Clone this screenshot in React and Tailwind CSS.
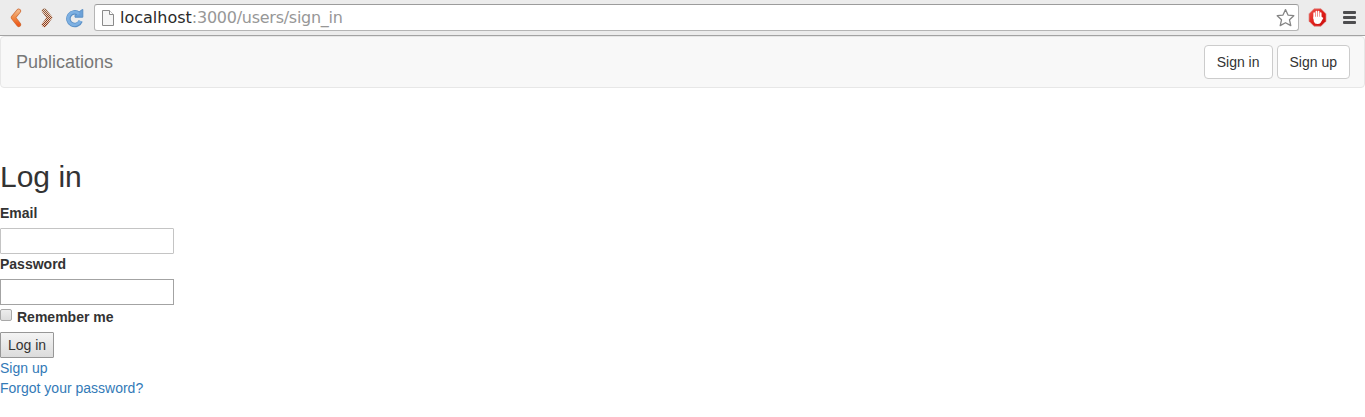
function BackIcon() {
  return (
    <svg width="12" height="20" viewBox="0 0 12 20" className="ml-[10px] shrink-0">
      <defs>
        <linearGradient id="back" x1="0" y1="0" x2="0" y2="1">
          <stop offset="0" stopColor="#f2b584" />
          <stop offset="0.5" stopColor="#f08a45" />
          <stop offset="1" stopColor="#ec5a1c" />
        </linearGradient>
      </defs>
      <path d="M8.7 3 L3.2 9.6 L8.7 16.6" fill="none" stroke="#cf6f3c" strokeWidth="4.8" strokeLinecap="round" strokeLinejoin="round" />
      <path d="M8.7 3 L3.2 9.6 L8.7 16.6" fill="none" stroke="url(#back)" strokeWidth="3.4" strokeLinecap="round" strokeLinejoin="round" />
    </svg>
  );
}

function ForwardIcon() {
  return (
    <svg width="12" height="20" viewBox="0 0 12 20" className="ml-[19px] shrink-0">
      <defs>
        <linearGradient id="forward" gradientUnits="userSpaceOnUse" x1="0" y1="0" x2="0" y2="20">
          <stop offset="0" stopColor="#8a6044" />
          <stop offset="1" stopColor="#8c300c" />
        </linearGradient>
        <pattern id="checks" width="2" height="2" patternUnits="userSpaceOnUse">
          <rect width="1" height="1" fill="#ecd5c6" />
          <rect x="1" y="1" width="1" height="1" fill="#ecd5c6" />
        </pattern>
      </defs>
      <g fill="none" strokeWidth="4.8" strokeLinecap="round" strokeLinejoin="round">
        <path d="M3.3 3 L8.8 9.6 L3.3 16.6" stroke="url(#forward)" />
        <path d="M3.3 3 L8.8 9.6 L3.3 16.6" stroke="url(#checks)" />
      </g>
    </svg>
  );
}

function ReloadIcon() {
  return (
    <svg width="20" height="20" viewBox="0 0 20 20" className="ml-3 shrink-0">
      <path d="M13.8 5.9 A6.3 6.3 0 1 0 15.6 13" fill="none" stroke="#5b90c6" strokeWidth="4.6" strokeLinejoin="round" />
      <path d="M17.8 1.4 V9.2 H10 V7.2 L12.6 5.6 L15.6 2.6 Z" fill="#6ba1d8" stroke="#5b90c6" strokeWidth="1" strokeLinejoin="round" />
      <path d="M14 6.1 A6.3 6.3 0 1 0 15.3 12.9" fill="none" stroke="#7db0e2" strokeWidth="2.8" />
    </svg>
  );
}

function PageIcon() {
  return (
    <svg width="12" height="16" viewBox="0 0 12 16" className="ml-[7px] shrink-0">
      <path d="M0.5 0.5 H7.5 L11.5 4.5 V15.5 H0.5 Z" fill="#f6f6f6" stroke="#8a8a8a" />
      <path d="M7.5 0.5 V4.5 H11.5" fill="#fff" stroke="#8a8a8a" />
    </svg>
  );
}

function StarIcon() {
  return (
    <svg width="20" height="20" viewBox="-0.5 0 20 20" className="mr-[3px] shrink-0">
      <path
        d="M10 1.6 L12.5 7.1 L18.3 7.7 L14 11.8 L15.3 17.6 L10 14.7 L4.7 17.6 L6 11.8 L1.7 7.7 L7.5 7.1 Z"
        fill="#fff"
        stroke="#858585"
        strokeWidth="1.3"
        strokeLinejoin="round"
      />
    </svg>
  );
}

function BlockerIcon() {
  return (
    <svg width="19" height="19" viewBox="0 0 19 19" className="ml-[9px] shrink-0">
      <defs>
        <linearGradient id="stop" x1="0" y1="0" x2="1" y2="1">
          <stop offset="0" stopColor="#f0574f" />
          <stop offset="0.5" stopColor="#e0201b" />
          <stop offset="1" stopColor="#c80c0c" />
        </linearGradient>
      </defs>
      <path d="M6 0.8 H13 L18 5.8 V13.2 L13 18.2 H6 L1 13.2 V5.8 Z" fill="url(#stop)" stroke="#dc8c88" strokeWidth="0.7" />
      <path
        d="M6.2 10.5 V5.2 M8.4 9.5 V3.7 M10.6 9.5 V3.7 M12.7 10.5 V5.2"
        stroke="#fff"
        strokeWidth="1.7"
        strokeLinecap="round"
      />
      <path d="M5.4 8.8 H13.5 L14.5 9.6 Q15.3 9.3 15.2 10.3 L12.6 14.8 Q11.8 16 9.5 16 Q6.5 16 5.8 13.5 Z" fill="#fff" />
    </svg>
  );
}

function MenuIcon() {
  return (
    <svg width="13" height="13" viewBox="0 0 13 13" className="ml-4 shrink-0">
      <rect width="13" height="3" rx="1" fill="#4d4d4f" />
      <rect y="5" width="13" height="3" rx="1" fill="#4d4d4f" />
      <rect y="10" width="13" height="3" rx="1" fill="#4d4d4f" />
    </svg>
  );
}

function BrowserBar() {
  return (
    <header className="flex h-9 items-center border-b border-[#a3a3a3] bg-[#ececec]">
      <BackIcon />
      <ForwardIcon />
      <ReloadIcon />
      <div className="ml-[9px] flex h-[27px] w-[1205px] shrink-0 items-center rounded-[3px] border border-[#b5b5b5] border-t-[#9c9c9c] bg-white">
        <PageIcon />
        <div className="ml-[6px] flex-1 font-['DejaVu_Sans',sans-serif] text-[16px] leading-5 text-[#979797]">
          <span className="text-[#2a2a2a]">localhost</span>
          <span className="tracking-[-0.26px]">:3000/users/sign_in</span>
        </div>
        <StarIcon />
      </div>
      <BlockerIcon />
      <MenuIcon />
    </header>
  );
}

function NavButton({ children }) {
  return (
    <button className="h-[34px] rounded-[4px] border border-[#ccc] bg-white px-3 text-[14px] leading-5 text-[#333]">
      {children}
    </button>
  );
}

export default function App() {
  return (
    <div className="h-[417px] overflow-hidden bg-white font-['Liberation_Sans',Arial,sans-serif] text-[14px] leading-5 text-[#333]">
      <BrowserBar />
      <nav className="flex h-[52px] items-center justify-between rounded-[4px] border border-[#e7e7e7] bg-[#f8f8f8] pr-[14px] pl-[15px]">
        <a className="text-[18px] leading-5 text-[#777]">Publications</a>
        <div className="flex gap-1">
          <NavButton>Sign in</NavButton>
          <NavButton>Sign up</NavButton>
        </div>
      </nav>
      <main className="flex flex-col items-start pt-[72px]">
        <h2 className="mb-[10px] text-[30px] leading-[33px] font-medium">Log in</h2>
        <label htmlFor="email" className="mb-[5px] font-bold">Email</label>
        <input id="email" type="email" className="h-[26px] w-[174px] rounded-[1px] border border-[#c4c4c4] bg-white px-1" />
        <label htmlFor="password" className="mb-[5px] font-bold">Password</label>
        <input id="password" type="password" className="h-[26px] w-[174px] border border-[#a3a3a3] bg-white px-1" />
        <div className="mt-[2px] mb-[5px] flex">
          <input
            id="remember"
            type="checkbox"
            className="mt-[2px] mr-[5px] h-3 w-3 appearance-none rounded-[2px] border border-[#a8a8a8] bg-linear-to-b from-[#ededed] to-[#dcdcdc]"
          />
          <label htmlFor="remember" className="font-bold">Remember me</label>
        </div>
        <button className="h-[26px] w-[54px] rounded-[1px] border border-[#979797] bg-linear-to-b from-[#f4f4f4] to-[#dcdcdc] text-center leading-5">
          Log in
        </button>
        <a className="text-[#337ab7]">Sign up</a>
        <a className="text-[#337ab7]">Forgot your password?</a>
      </main>
    </div>
  );
}
